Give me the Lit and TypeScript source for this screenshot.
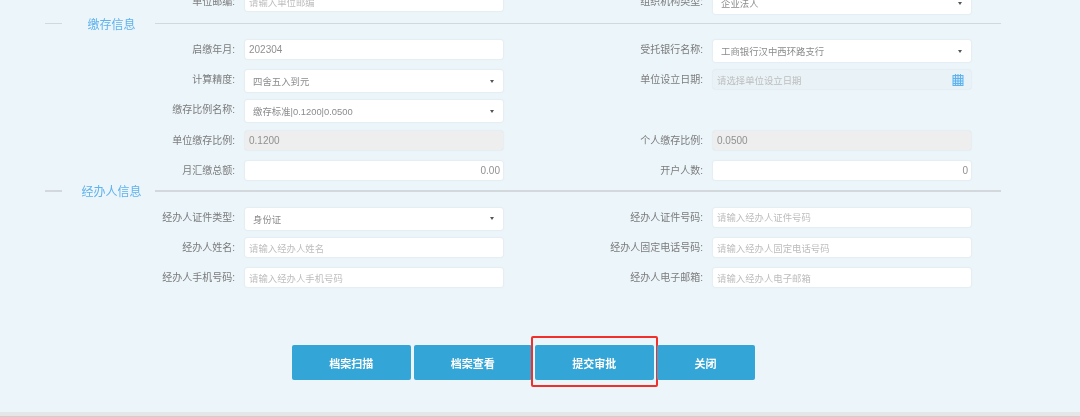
import { LitElement, html, css } from "lit";
import { customElement } from "lit/decorators.js";

type F = { l: string; v?: string; p?: string; k?: "select" | "dis" | "num" | "date" };

const top: F[][] = [[{ l: "单位邮编:", p: "请输入单位邮编" }, { l: "组织机构类型:", v: "企业法人", k: "select" }]];
const pay: F[][] = [
  [{ l: "启缴年月:", v: "202304" }, { l: "受托银行名称:", v: "工商银行汉中西环路支行", k: "select" }],
  [{ l: "计算精度:", v: "四舍五入到元", k: "select" }, { l: "单位设立日期:", p: "请选择单位设立日期", k: "date" }],
  [{ l: "缴存比例名称:", v: "缴存标准|0.1200|0.0500", k: "select" }, { l: "" }],
  [{ l: "单位缴存比例:", v: "0.1200", k: "dis" }, { l: "个人缴存比例:", v: "0.0500", k: "dis" }],
  [{ l: "月汇缴总额:", v: "0.00", k: "num" }, { l: "开户人数:", v: "0", k: "num" }],
];
const agent: F[][] = [
  [{ l: "经办人证件类型:", v: "身份证", k: "select" }, { l: "经办人证件号码:", p: "请输入经办人证件号码" }],
  [{ l: "经办人姓名:", p: "请输入经办人姓名" }, { l: "经办人固定电话号码:", p: "请输入经办人固定电话号码" }],
  [{ l: "经办人手机号码:", p: "请输入经办人手机号码" }, { l: "经办人电子邮箱:", p: "请输入经办人电子邮箱" }],
];

@customElement("app-root")
export class AppRoot extends LitElement {
  static styles = css`
    :host { display: block; }
    .page {
      height: 417px; width: 1080px; overflow: hidden; background: #ecf5fa;
      display: flex; flex-direction: column; filter: blur(0.55px);
      font-family: "Liberation Sans", "Noto Sans CJK SC", sans-serif; font-size: 10px; color: #8a8a8a;
    }
    .rows { display: flex; flex-direction: column; }
    .rows.first { margin-top: -8px; }
    .row {
      height: 30.2px; display: grid; align-items: start;
      grid-template-columns: 237px 258px 194px 258px; column-gap: 8px;
    }
    .label { text-align: right; color: #7b7b7b; white-space: nowrap; line-height: 20px; padding-right: 2px; }
    .box {
      height: 19px; box-sizing: border-box; background: #fff; border-radius: 2px;
      box-shadow: 0 0 1.5px rgba(120,140,150,.3); display: flex; align-items: center;
      padding: 0 4px; white-space: nowrap; position: relative; font-size: 9.4px;
    }
    .ph { color: #bdbdbd; }
    .val { color: #909090; font-size: 10px; }
    .select { height: 22px; padding: 0 8px; }
    .select .val { color: #8c8c8c; font-size: 9.4px; }
    .arrow { margin-left: auto; width: 0; height: 0; margin-right: 1.5px;
      border-left: 2.5px solid transparent; border-right: 2.5px solid transparent; border-top: 3px solid #555; }
    .dis { background: #eeeeee; }
    .date { background: #e9f2f7; }
    .num { justify-content: flex-end; padding-right: 3px; }
    .cal { margin-left: auto; margin-right: 3px; display: block; }
    .head {
      height: 10px; width: 1001px; padding-left: 45px; box-sizing: border-box;
      display: flex; align-items: center;
    }
    .head.a { margin: -3.7px 0 11.5px; }
    .head.b { margin: -5px 0 12px; }
    .dash { width: 17px; height: 1.5px; background: #d2d8db; }
    .line { flex: 1; height: 1.5px; background: #d2d8db; }
    .title { width: 93px; box-sizing: border-box; padding-left: 6px; text-align: center; color: #5fb2ee; font-size: 12px; white-space: nowrap; }
    .actions {
      margin-top: 46.8px; padding-left: 292px; display: flex; gap: 3px; align-items: stretch;
    }
    .btn {
      width: 118.5px; height: 35px; background: #33a5d6; color: #fff; border-radius: 2px;
      display: flex; align-items: center; justify-content: center; font-size: 11px; font-weight: 700;
      position: relative;
    }
    .btn.short { width: 98px; }
    .btn.mark::after {
      content: ""; position: absolute; inset: -9px -4px -7px -4px;
      border: 2px solid #f1302c; border-radius: 2px;
    }
    .spacer { flex: 1; }
    .stripe { height: 5px; background: linear-gradient(#e4e6e7 70%, #c4c4c4); }
  `;

  private field(f: F) {
    if (!f.l) return html`<div></div><div></div>`;
    const k = f.k ?? "";
    return html`<div class="label">${f.l}</div>
      <div class="box ${k}">
        ${f.v ? html`<span class="val">${f.v}</span>` : html`<span class="ph">${f.p}</span>`}
        ${k === "select" ? html`<span class="arrow"></span>` : ""}
        ${k === "date"
          ? html`<svg class="cal" width="12" height="13" viewBox="0 0 12 13" fill="none" stroke="#5eb3ec" stroke-width="1">
              <rect x="1" y="2.5" width="10" height="10" fill="#cfe7f8"/>
              <path d="M1 5.5H11M1 8H11M1 10.5H11M3.5 1V12.5M6 1V12.5M8.5 1V12.5"/>
            </svg>`
          : ""}
      </div>`;
  }

  private rows(list: F[][], cls = "") {
    return html`<div class="rows ${cls}">
      ${list.map((r) => html`<div class="row">${r.map((f) => this.field(f))}</div>`)}
    </div>`;
  }

  private head(t: string, cls: string) {
    return html`<div class="head ${cls}"><span class="dash"></span><span class="title">${t}</span><span class="line"></span></div>`;
  }

  render() {
    return html`<div class="page">
      ${this.rows(top, "first")}
      ${this.head("缴存信息", "a")}
      ${this.rows(pay)}
      ${this.head("经办人信息", "b")}
      ${this.rows(agent)}
      <div class="actions">
        <div class="btn">档案扫描</div>
        <div class="btn">档案查看</div>
        <div class="btn mark">提交审批</div>
        <div class="btn short">关闭</div>
      </div>
      <div class="spacer"></div>
      <div class="stripe"></div>
    </div>`;
  }
}
